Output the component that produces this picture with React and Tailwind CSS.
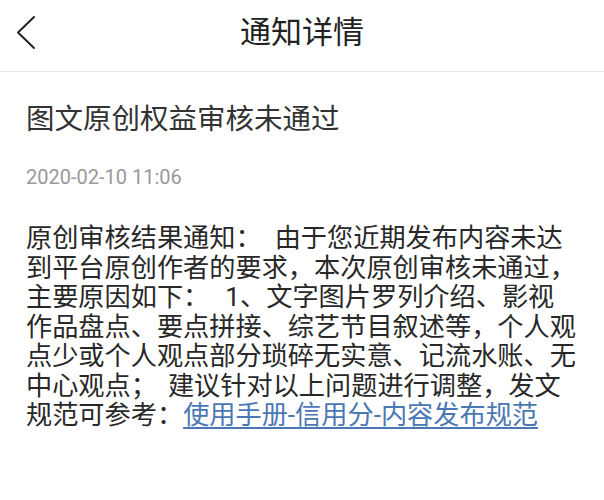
export default function App() {
  return (
    <div
      className="w-[604px] h-[500px] bg-white overflow-hidden"
      style={{ fontFamily: 'Roboto, "Noto Sans CJK SC", sans-serif' }}
    >
      <header className="relative h-[72px] border-b border-[#e6e6e6] flex items-center justify-center">
        <svg
          className="absolute left-[14px] top-[15px]"
          width="24"
          height="36"
          viewBox="0 0 24 36"
          fill="none"
        >
          <path d="M20 2 L4 17.5 L20 33" stroke="#222" strokeWidth="2" strokeLinecap="round" strokeLinejoin="round" />
        </svg>
        <h1 className="text-[31px] leading-none text-[#222] font-normal mt-[-6px]">通知详情</h1>
      </header>
      <main className="px-[26px]">
        <h2 className="mt-[31px] text-[28.5px] leading-[34px] text-[#333] font-normal">图文原创权益审核未通过</h2>
        <p className="mt-[28px] text-[20px] leading-[24px] text-[#999]">2020-02-10 11:06</p>
        <p className="mt-[35px] w-[552px] text-[26.2px] leading-[29.5px] text-[#282828]">
          原创审核结果通知：<span className="inline-block w-[13px]"></span>由于您近期发布内容未达到平台原创作者的要求，本次原创审核未通过，主要原因如下：<span className="inline-block w-[16px]"></span>1、文字图片罗列介绍、影视作品盘点、要点拼接、综艺节目叙述等，个人观点少或个人观点部分琐碎无实意、记流水账、无中心观点；<span className="inline-block w-[11px]"></span>建议针对以上问题进行调整，发文规范可参考：<a className="text-[#4a78b4] underline underline-offset-[3px] decoration-[1.5px]">使用手册-信用分-内容发布规范</a>
        </p>
      </main>
    </div>
  );
}
